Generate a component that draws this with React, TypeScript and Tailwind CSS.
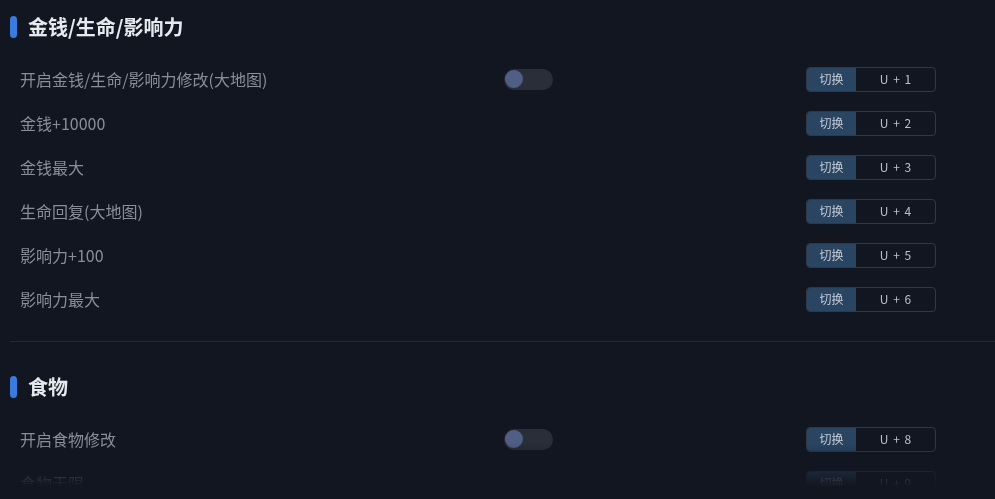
const font = { fontFamily: '"Noto Sans CJK SC", "Noto Sans", sans-serif' };

type Row = { label: string; toggle?: boolean; key: string };

const sections: { title: string; rows: Row[] }[] = [
  {
    title: "金钱/生命/影响力",
    rows: [
      { label: "开启金钱/生命/影响力修改(大地图)", toggle: true, key: "U + 1" },
      { label: "金钱 + 10000", key: "U + 2" },
      { label: "金钱最大", key: "U + 3" },
      { label: "生命回复(大地图)", key: "U + 4" },
      { label: "影响力 + 100", key: "U + 5" },
      { label: "影响力最大", key: "U + 6" },
    ],
  },
  {
    title: "食物",
    rows: [
      { label: "开启食物修改", toggle: true, key: "U + 8" },
      { label: "食物无限", key: "U + 9" },
      { label: "食物最大", key: "U + 0" },
    ],
  },
];

function Toggle() {
  return (
    <div className="w-[49px] h-[21px] rounded-full bg-[#2a2e38] flex items-center px-[1px]">
      <div className="w-[18px] h-[18px] rounded-full bg-[#505e85]" />
    </div>
  );
}

function HotkeyButton({ hotkey }: { hotkey: string }) {
  return (
    <div className="flex w-[130px] h-[25px] rounded-[4px] border border-[#2f3a49] overflow-hidden text-[12px]">
      <div className="w-[49px] bg-[#2a4562] text-[#c3cbd6] flex items-center justify-center">切换</div>
      <div className="flex-1 text-[#bcc2cc] flex items-center justify-center">{hotkey.split(" ").join("\u2009\u2009")}</div>
    </div>
  );
}

function SettingRow({ row }: { row: Row }) {
  return (
    <div className="h-[44px] flex items-center pl-[10px]">
      <div className="w-[484px] text-[16px] text-[#898e98]">{row.label.split(" + ").join("+")}</div>
      <div className="w-[302px]">{row.toggle && <Toggle />}</div>
      <HotkeyButton hotkey={row.key} />
    </div>
  );
}

function SectionTitle({ title }: { title: string }) {
  return (
    <div className="flex items-center h-[22px] gap-[11px]">
      <div className="w-[7px] h-[22px] rounded-full bg-[#3a7be0]" />
      <h2 className="text-[20px] leading-[22px] font-bold text-[#e6e9ee]">{title}</h2>
    </div>
  );
}

export default function App() {
  return (
    <div className="w-full h-[499px] bg-[#121620] overflow-hidden" style={font}>
      <div className="h-[487px] overflow-hidden pl-[10px] pt-4 [mask-image:linear-gradient(to_bottom,black_91%,transparent_100%)]">
        <SectionTitle title={sections[0].title} />
        <div className="mt-[19px]">
          {sections[0].rows.map((r) => (
            <SettingRow key={r.label} row={r} />
          ))}
        </div>
        <div className="mt-[20px] h-px bg-[#232833]" />
        <div className="mt-[34px]">
          <SectionTitle title={sections[1].title} />
        </div>
        <div className="mt-[19px]">
          {sections[1].rows.map((r) => (
            <SettingRow key={r.label} row={r} />
          ))}
        </div>
      </div>
    </div>
  );
}
